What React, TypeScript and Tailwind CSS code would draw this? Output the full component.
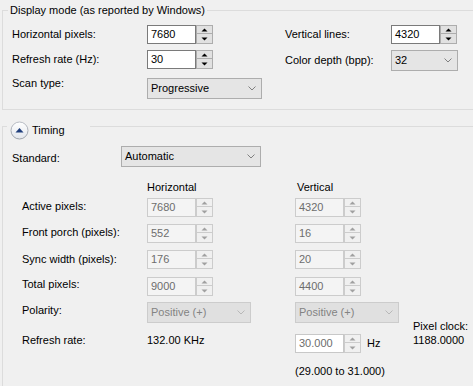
import React from "react";

function UpArrow({ c }: { c: string }) {
  return (
    <svg width="7" height="4" viewBox="0 0 7 4">
      <path d="M0.5 3.5 L3.5 0.5 L6.5 3.5 Z" fill={c} />
    </svg>
  );
}
function DownArrow({ c }: { c: string }) {
  return (
    <svg width="7" height="4" viewBox="0 0 7 4">
      <path d="M0.5 0.5 L3.5 3.5 L6.5 0.5 Z" fill={c} />
    </svg>
  );
}

function Spin({ value, disabled, white }: { value: string; disabled?: boolean; white?: boolean }) {
  const box = disabled
    ? white
      ? "border-[#c8c8c8] bg-white text-[#6d6d6d]"
      : "border-[#cccccc] bg-[#f4f4f4] text-[#6d6d6d]"
    : "border-[#7a7a7a] bg-white text-black";
  const btn = disabled ? "border-[#cccccc] bg-[#f0f0f0]" : "border-[#adadad] bg-[#e1e1e1]";
  const arrow = disabled ? "#a0a0a0" : "#000000";
  return (
    <div className="flex h-[19px] shrink-0">
      <div className={`w-[49px] h-[19px] border pl-[3px] leading-[17px] ${box}`}>{value}</div>
      <div className={`w-[17px] h-[19px] border flex flex-col ${btn}`}>
        <div className={`h-[8px] border-b flex items-center justify-center ${btn}`}>
          <UpArrow c={arrow} />
        </div>
        <div className="flex-1 flex items-center justify-center">
          <DownArrow c={arrow} />
        </div>
      </div>
    </div>
  );
}

function Chevron({ c }: { c: string }) {
  return (
    <svg width="8" height="5" viewBox="0 0 8 5">
      <path d="M0.5 0.5 L4 4 L7.5 0.5" fill="none" stroke={c} strokeWidth="1" />
    </svg>
  );
}

function Combo({ value, w, disabled }: { value: string; w: string; disabled?: boolean }) {
  const cls = disabled
    ? "border-[#cccccc] bg-[#e0e0e0] text-[#838383]"
    : "border-[#adadad] bg-[#e5e5e5] text-black";
  return (
    <div className={`${w} h-[21px] shrink-0 border flex items-center justify-between pl-[3px] pr-[5px] ${cls}`}>
      <span className="leading-[19px]">{value}</span>
      <Chevron c={disabled ? "#b8b8b8" : "#808080"} />
    </div>
  );
}

function TimingIcon() {
  return (
    <svg width="19" height="19" viewBox="0 0 19 19">
      <defs>
        <linearGradient id="tf" x1="0" y1="0" x2="0" y2="1">
          <stop offset="0" stopColor="#ffffff" />
          <stop offset="1" stopColor="#e2e6ec" />
        </linearGradient>
        <linearGradient id="ts" x1="0" y1="0" x2="0" y2="1">
          <stop offset="0" stopColor="#b8bcc4" />
          <stop offset="1" stopColor="#9aa0a8" />
        </linearGradient>
      </defs>
      <circle cx="9.5" cy="9.5" r="8.5" fill="url(#tf)" stroke="url(#ts)" strokeWidth="1" />
      <path d="M5.5 11.5 L13.5 11.5 L9.5 7 Z" fill="#1f3e7c" />
    </svg>
  );
}

export default function App() {
  return (
    <div className="w-[473px] h-[386px] bg-[#f0f0f0] overflow-hidden flex flex-col text-[11px] text-black [font-family:'Liberation_Sans',Arial,sans-serif]">
      {/* Display mode group */}
      <div className="relative mt-[10px] ml-[2px] h-[100px] shrink-0 border-t border-l border-b border-[#dcdcdc] pt-[14px] pl-[9px]">
        <div className="absolute left-[5px] top-[-9px] px-[2px] bg-[#f0f0f0] leading-[16px]">
          Display mode (as reported by Windows)
        </div>
        <div className="flex h-[19px] items-start">
          <div className="w-[135px] leading-[18px]">Horizontal pixels:</div>
          <Spin value="7680" />
          <div className="ml-[72px] w-[106px] leading-[18px]">Vertical lines:</div>
          <Spin value="4320" />
        </div>
        <div className="mt-[6px] flex h-[21px] items-start">
          <div className="w-[135px] leading-[19px]">Refresh rate (Hz):</div>
          <Spin value="30" />
          <div className="ml-[72px] w-[106px] leading-[21px]">Color depth (bpp):</div>
          <Combo value="32" w="w-[67px]" />
        </div>
        <div className="mt-[7px] flex h-[21px] items-start">
          <div className="w-[135px] mt-[-2px] leading-[14px]">Scan type:</div>
          <Combo value="Progressive" w="w-[115px]" />
        </div>
      </div>

      {/* Timing group */}
      <div className="relative mt-[16px] ml-[2px] flex-1 border-t border-l border-[#dcdcdc] pt-[19px] pl-[9px]">
        <div className="absolute left-[4px] top-[-6px] w-[83px] h-[19px] pl-[3px] bg-[#f0f0f0] flex items-center gap-[3px]">
          <TimingIcon />
          <span className="leading-[19px]">Timing</span>
        </div>
        <div className="flex h-[21px] items-start">
          <div className="w-[109px] leading-[24px]">Standard:</div>
          <Combo value="Automatic" w="w-[140px]" />
        </div>

        <div className="pl-[10px]">
          <div className="mt-[13px] flex h-[14px] leading-[14px]">
            <div className="w-[125px]" />
            <div className="w-[148px]">Horizontal</div>
            <div className="pl-[2px]">Vertical</div>
          </div>

          <div className="mt-[4px] flex h-[19px]">
            <div className="w-[125px] leading-[17px]">Active pixels:</div>
            <div className="w-[148px]"><Spin value="7680" disabled /></div>
            <Spin value="4320" disabled />
          </div>
          <div className="mt-[7px] flex h-[19px]">
            <div className="w-[125px] leading-[17px]">Front porch (pixels):</div>
            <div className="w-[148px]"><Spin value="552" disabled /></div>
            <Spin value="16" disabled />
          </div>
          <div className="mt-[7px] flex h-[19px]">
            <div className="w-[125px] leading-[18px]">Sync width (pixels):</div>
            <div className="w-[148px]"><Spin value="176" disabled /></div>
            <Spin value="20" disabled />
          </div>
          <div className="mt-[8px] flex h-[19px]">
            <div className="w-[125px] leading-[15px]">Total pixels:</div>
            <div className="w-[148px]"><Spin value="9000" disabled /></div>
            <Spin value="4400" disabled />
          </div>

          <div className="mt-[6px] flex">
            <div className="flex flex-col">
              <div className="flex h-[21px]">
                <div className="w-[125px] leading-[16px]">Polarity:</div>
                <div className="w-[148px]"><Combo value="Positive (+)" w="w-[104px]" disabled /></div>
                <div className="w-[118px]"><Combo value="Positive (+)" w="w-[104px]" disabled /></div>
              </div>
              <div className="mt-[11px] flex h-[19px]">
                <div className="w-[125px] leading-[13px]">Refresh rate:</div>
                <div className="w-[148px] leading-[13px]">132.00 KHz</div>
                <Spin value="30.000" disabled white />
                <div className="ml-[6px] leading-[19px]">Hz</div>
              </div>
              <div className="mt-[11px] flex h-[14px] leading-[14px]">
                <div className="w-[273px]" />
                <div>(29.000 to 31.000)</div>
              </div>
            </div>
            <div className="pt-[17px] leading-[14px]">
              <div>Pixel clock:</div>
              <div>1188.0000</div>
            </div>
          </div>
        </div>
      </div>
    </div>
  );
}
